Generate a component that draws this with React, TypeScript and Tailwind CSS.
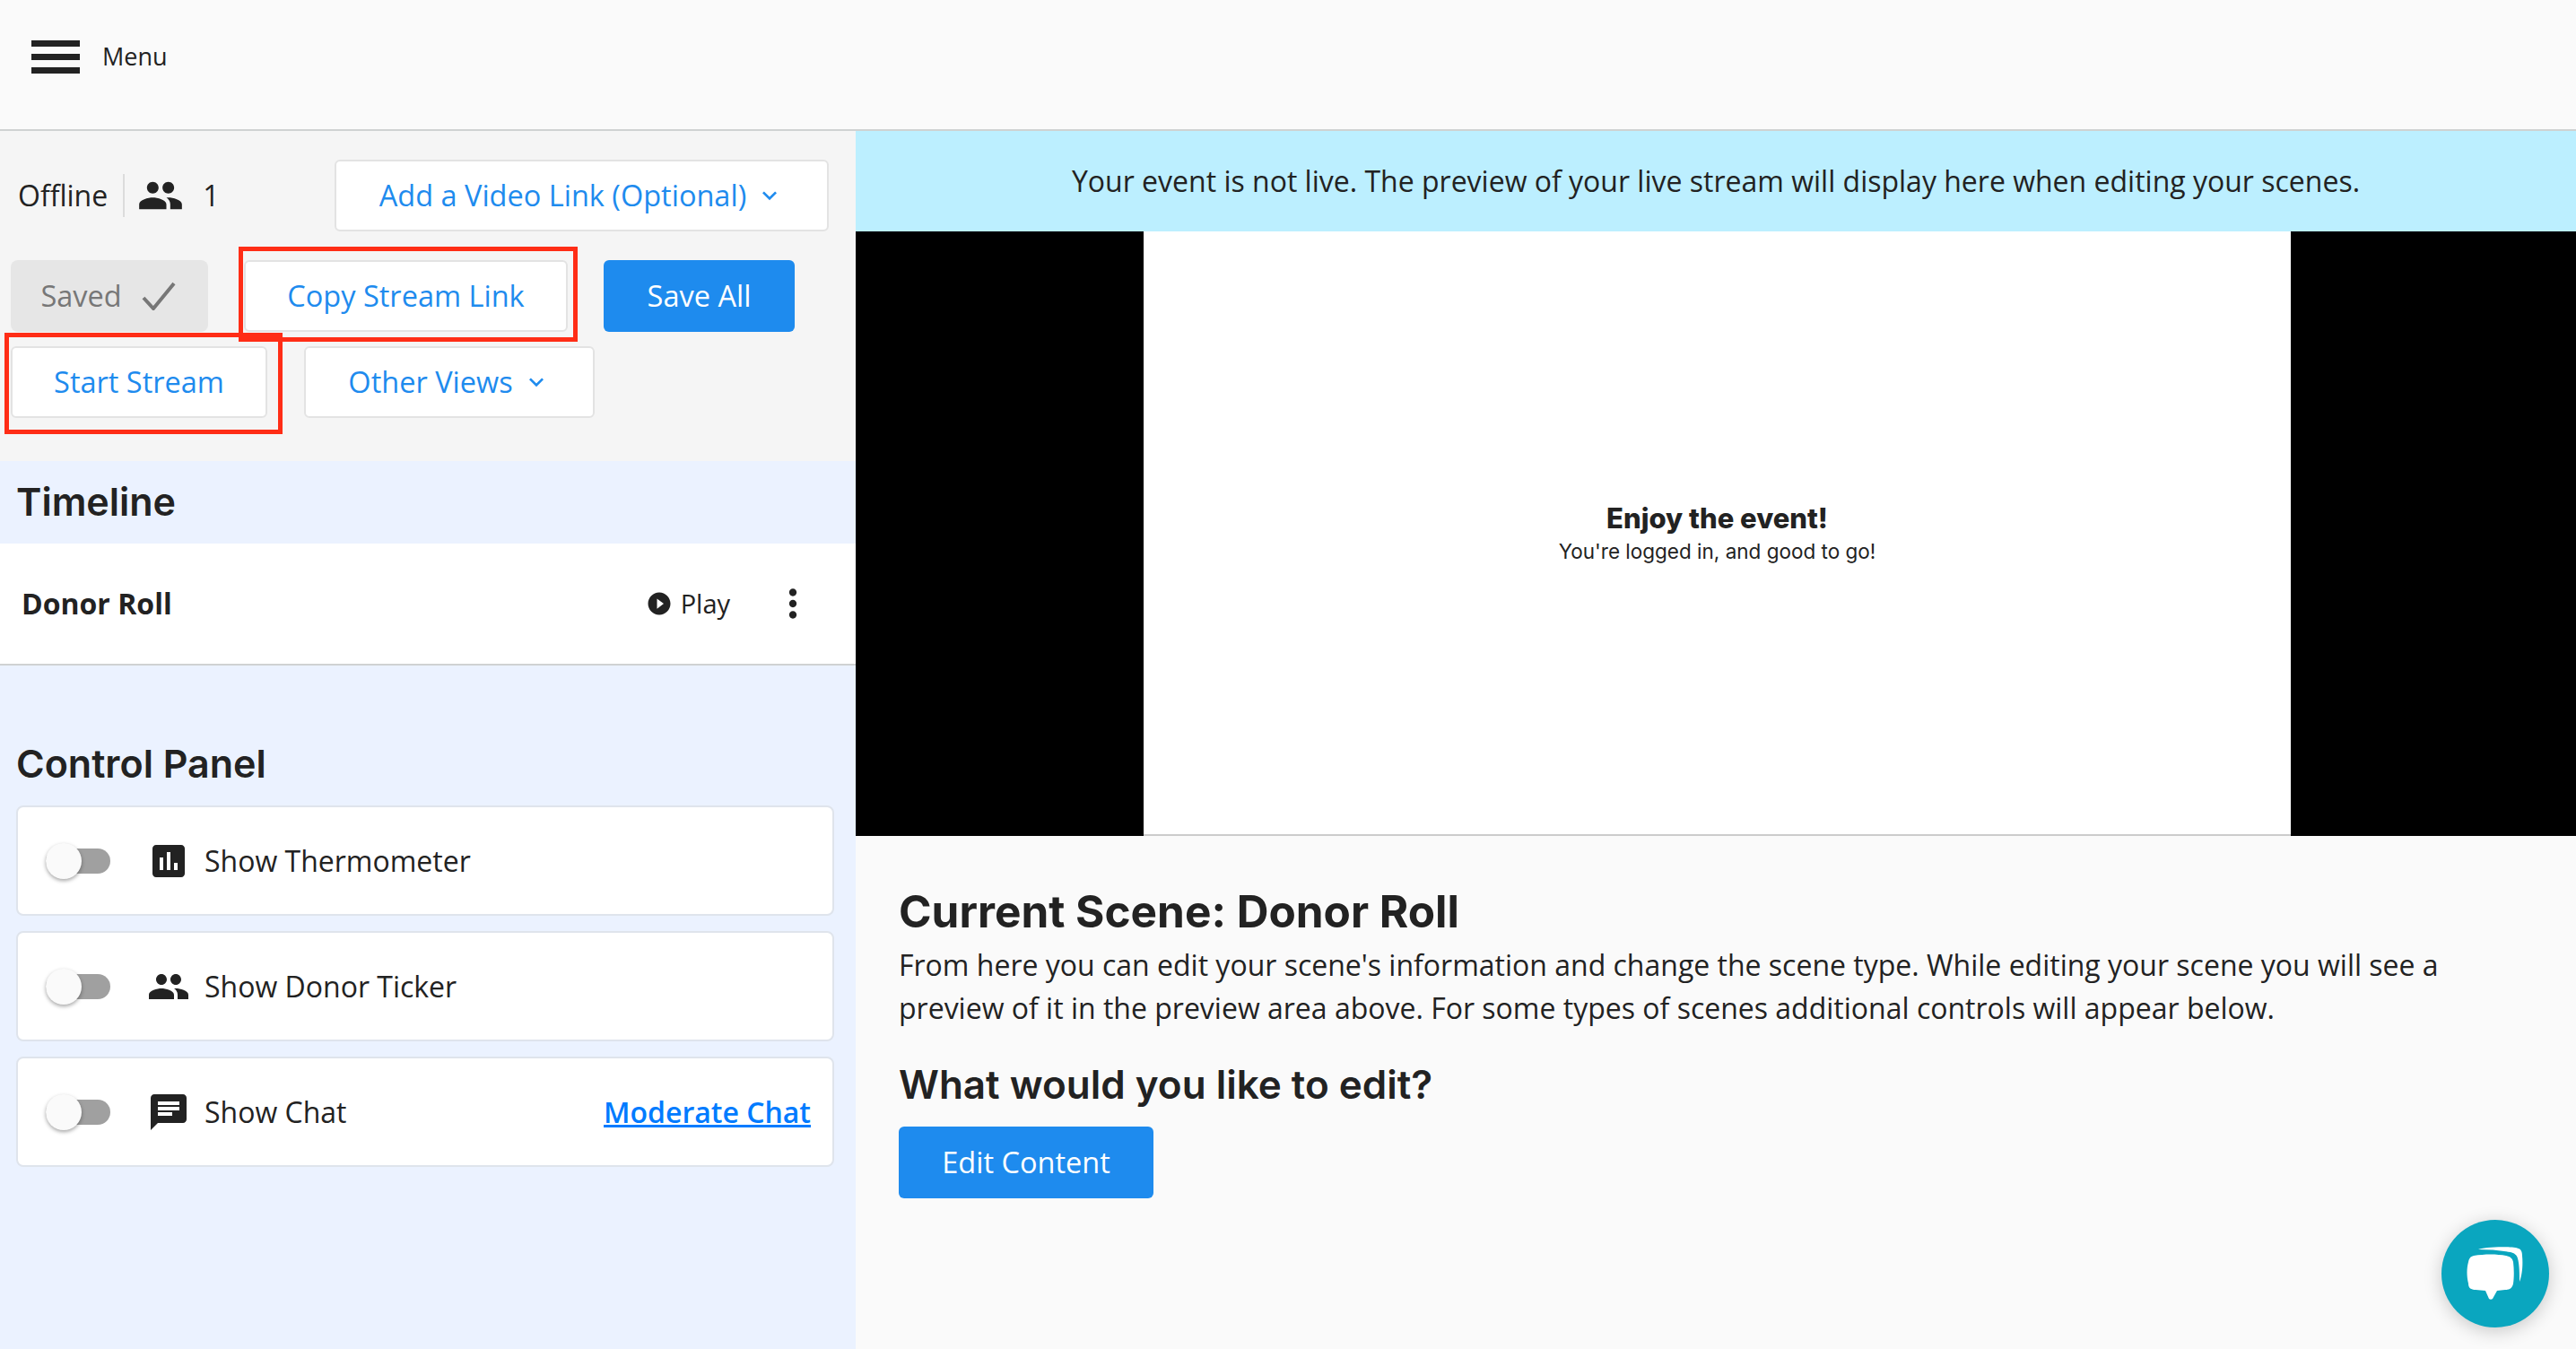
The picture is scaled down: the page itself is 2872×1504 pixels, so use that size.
import { MdChat, MdInsertChart, MdKeyboardArrowDown, MdMoreVert, MdPeople, MdPlayCircleFilled } from "react-icons/md"

const outlineBtn =
  "h-[80px] flex items-center justify-center bg-white border-2 border-[#e3e3e3] rounded-[6px] text-[#1e8bee] text-[32.5px] font-medium"

function ToggleRow({ icon, label, link }: { icon: React.ReactNode; label: string; link?: string }) {
  return (
    <div className="h-[123px] bg-white border-2 border-[#dfe4ec] rounded-[8px] flex items-center pl-[31px] pr-[24px]">
      {/* switch */}
      <div className="relative w-[72px] h-[28px] rounded-full bg-[#a0a0a0]">
        <div className="absolute left-0 top-[-6px] w-[40px] h-[40px] rounded-full bg-[#fafafa] shadow-[0_2px_4px_rgba(0,0,0,0.35)]"></div>
      </div>
      <div className="w-[48px] ml-[41px] flex justify-center text-[#222222]">{icon}</div>
      <span className="ml-[16px] text-[32px] text-[#222222]">{label}</span>
      {link && <a className="ml-auto text-[32px] font-semibold text-[#007bff] underline">{link}</a>}
    </div>
  )
}

export default function App() {
  return (
    <div className="relative w-[2872px] h-[1504px] overflow-hidden bg-[#fafafa] font-['Open_Sans',sans-serif] text-[#222222]">
      {/* Header */}
      <header className="h-[146px] border-b-2 border-[#cfd2d2] flex items-center pl-[35px] pb-[18px]">
        <div className="w-[54px] flex flex-col gap-[8px]">
          <div className="h-[7px] bg-[#222222]"></div>
          <div className="h-[7px] bg-[#222222]"></div>
          <div className="h-[7px] bg-[#222222]"></div>
        </div>
        <span className="ml-[25px] text-[27px]">Menu</span>
      </header>

      <div className="flex h-[1358px]">
        {/* Left panel */}
        <aside className="w-[954px] shrink-0 bg-[#ebf2ff]">
          <div className="h-[368px] bg-[#f5f5f5] pt-[32px] pl-[12px]">
            <div className="flex items-center h-[80px] pr-[30px]">
              <span className="ml-[8px] text-[32px]">Offline</span>
              <div className="ml-[17px] w-[2px] h-[48px] bg-[#dcdcdc]"></div>
              <MdPeople className="ml-[14px] text-[52px]" />
              <span className="ml-[21px] text-[32px]">1</span>
              <button className={`${outlineBtn} ml-auto w-[551px]`}>
                Add a Video Link (Optional)
                <MdKeyboardArrowDown className="ml-[10px] text-[32px]" />
              </button>
            </div>

            <div className="flex mt-[32px]">
              <div className="w-[220px] h-[80px] rounded-[8px] bg-[#e6e6e6] text-[#777777] text-[32.5px] font-medium flex items-center justify-center pr-[3px]">
                Saved
                <svg className="ml-[22px]" width="38" height="32" viewBox="0 0 38 32" fill="none" stroke="#777777" strokeWidth="4">
                  <path d="M2 18 L13 30 L36 2" />
                </svg>
              </div>
              <div className="relative ml-[40px]">
                <button className={`${outlineBtn} w-[361px]`}>Copy Stream Link</button>
                <div className="absolute left-[-6px] top-[-15px] w-[378px] h-[106px] border-[5px] border-[#ff2d16]"></div>
              </div>
              <button className="ml-[40px] w-[213px] h-[80px] rounded-[6px] bg-[#1e8bee] text-white text-[32.5px] font-medium">Save All</button>
            </div>

            <div className="flex mt-[16px]">
              <div className="relative">
                <button className={`${outlineBtn} w-[286px]`}>Start Stream</button>
                <div className="absolute left-[-7px] top-[-15px] w-[310px] h-[113px] border-[5px] border-[#ff2d16]"></div>
              </div>
              <button className={`${outlineBtn} ml-[41px] w-[324px]`}>
                Other Views
                <MdKeyboardArrowDown className="ml-[10px] text-[32px]" />
              </button>
            </div>
          </div>

          {/* Timeline */}
          <div className="h-[92px] flex items-center pl-[18px] pb-[2px]">
            <h2 className="font-['Inter',sans-serif] font-semibold text-[43px]">Timeline</h2>
          </div>
          <div className="h-[136px] bg-white border-b-2 border-[#cfd2d2] flex items-center pl-[24px]">
            <span className="text-[32px] font-bold">Donor Roll</span>
            <MdPlayCircleFilled className="ml-[528px] text-[30px]" />
            <span className="ml-[9px] text-[29px]">Play</span>
            <MdMoreVert className="ml-[45px] text-[50px]" />
          </div>

          {/* Control panel */}
          <div className="px-[18px] pt-[83px]">
            <h2 className="font-['Inter',sans-serif] font-semibold text-[43px] leading-[52px]">Control Panel</h2>
            <div className="mt-[21px] mr-[6px] flex flex-col gap-[17px]">
              <ToggleRow icon={<MdInsertChart className="text-[48px]" />} label="Show Thermometer" />
              <ToggleRow icon={<MdPeople className="text-[48px]" />} label="Show Donor Ticker" />
              <ToggleRow icon={<MdChat className="text-[48px]" />} label="Show Chat" link="Moderate Chat" />
            </div>
          </div>
        </aside>

        {/* Right side */}
        <main className="flex-1 min-w-0">
          <div className="h-[112px] bg-[#bcefff] flex items-center justify-center text-[32px]">
            Your event is not live. The preview of your live stream will display here when editing your scenes.
          </div>
          <div className="h-[674px] bg-black pl-[321px]">
            <div className="w-[1279px] h-full bg-white border-b-2 border-[#cccccc] flex flex-col items-center justify-center pt-[2px]">
              <div className="font-['Inter',sans-serif] font-extrabold text-[31px] leading-[40px]">Enjoy the event!</div>
              <div className="font-['Inter',sans-serif] text-[22.5px] leading-[34px]">You're logged in, and good to go!</div>
            </div>
          </div>
          <div className="pl-[48px] pt-[54px]">
            <h1 className="font-['Inter',sans-serif] font-bold text-[49.5px] leading-[60px]">Current Scene: Donor Roll</h1>
            <p className="mt-[6px] w-[1740px] text-[32px] leading-[48px]">
              From here you can edit your scene's information and change the scene type. While editing your scene you will see a preview of it in the preview area above. For some types of scenes additional controls will appear below.
            </p>
            <h2 className="mt-[35px] font-['Inter',sans-serif] font-semibold text-[44px] leading-[52px]">What would you like to edit?</h2>
            <button className="mt-[21px] w-[284px] h-[80px] rounded-[6px] bg-[#1e8bee] text-white text-[32.5px] font-medium">Edit Content</button>
          </div>
        </main>
      </div>

      {/* Chat widget */}
      <div className="absolute left-[2722px] top-[1360px] w-[120px] h-[120px] rounded-full bg-[#0aa6bf] shadow-[0_4px_20px_rgba(0,0,0,0.2)]">
        <svg width="120" height="120" viewBox="0 0 120 120" fill="white">
          <path d="M41 33 C46 30 80 29 86 32 C89 33 90 36 90 40 C91 50 90 62 87 69 C87 60 87 50 85 43 C84 39 81 37 77 36 C66 34 52 33 41 33 Z" />
          <path d="M36 40 C48 38 62 38 72 40 C77 41 79 43 80 47 C81 55 81 64 80 71 C79 76 76 78 71 78 L62 79 L57 88 C56 89 54 89 53 88 L49 79 L38 78 C33 78 30 76 30 71 C28 63 28 54 30 47 C31 43 32 41 36 40 Z" />
        </svg>
      </div>
    </div>
  )
}
